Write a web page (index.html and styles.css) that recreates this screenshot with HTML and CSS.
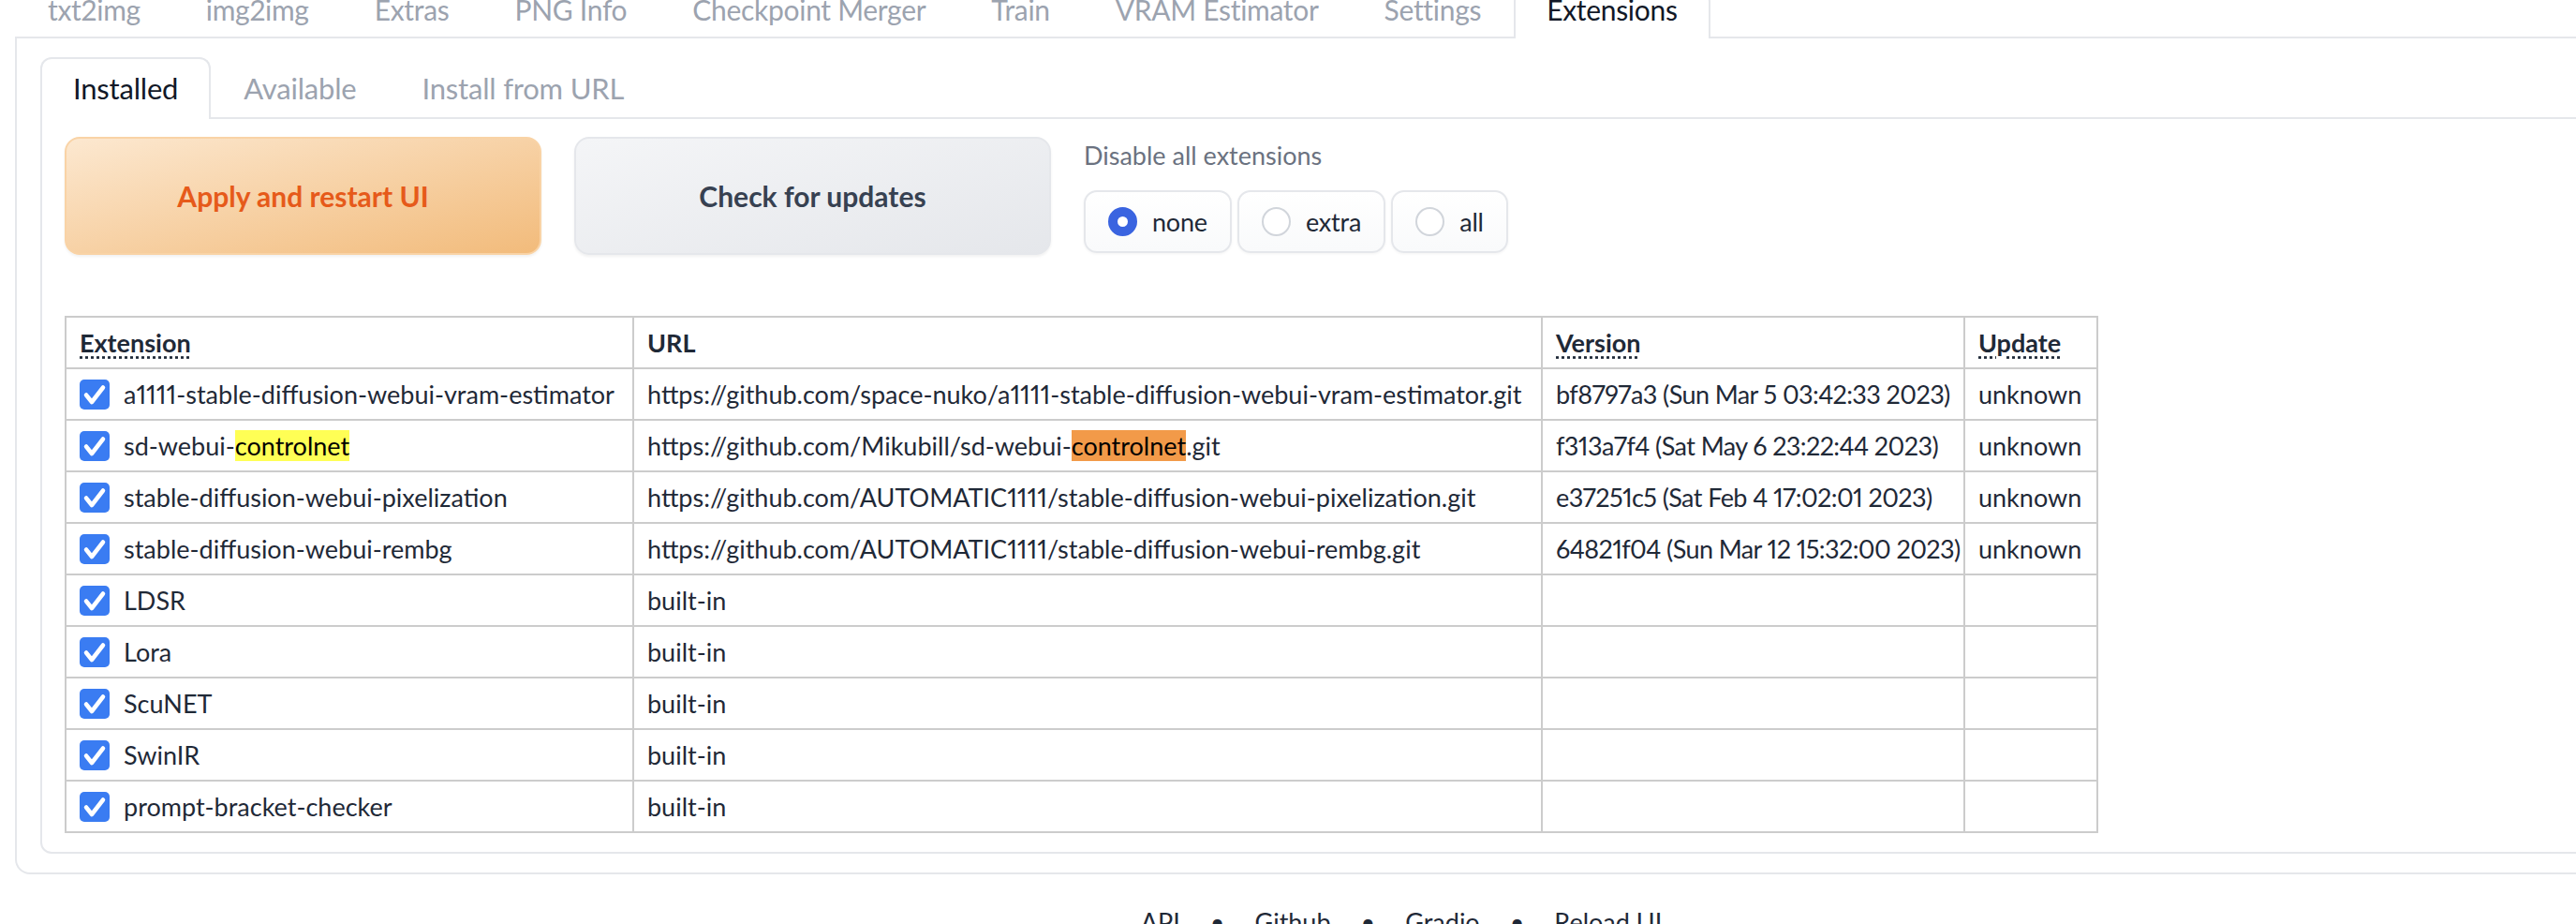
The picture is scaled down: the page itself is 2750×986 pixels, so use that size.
FILE: index.html
```html
<!DOCTYPE html>
<html lang="en">
<head>
<meta charset="utf-8">
<title>Extensions</title>
<link rel="stylesheet" href="styles.css">
</head>
<body>
<div class="app">
  <nav class="top-tabs">
    <button class="top-tab">txt2img</button>
    <button class="top-tab">img2img</button>
    <button class="top-tab">Extras</button>
    <button class="top-tab">PNG Info</button>
    <button class="top-tab">Checkpoint Merger</button>
    <button class="top-tab">Train</button>
    <button class="top-tab">VRAM Estimator</button>
    <button class="top-tab">Settings</button>
    <button class="top-tab selected">Extensions</button>
  </nav>
  <div class="tab-panel">
    <nav class="sub-tabs">
      <button class="sub-tab selected">Installed</button>
      <button class="sub-tab">Available</button>
      <button class="sub-tab">Install from URL</button>
    </nav>
    <div class="sub-panel">
      <div class="actions">
        <button class="btn btn-primary">Apply and restart UI</button>
        <button class="btn btn-secondary">Check for updates</button>
        <div class="radio-group">
          <span class="radio-label">Disable all extensions</span>
          <div class="radio-options">
            <label class="radio-option"><span class="radio checked"></span><span>none</span></label>
            <label class="radio-option"><span class="radio"></span><span>extra</span></label>
            <label class="radio-option"><span class="radio"></span><span>all</span></label>
          </div>
        </div>
      </div>
      <table class="ext-table">
        <colgroup>
          <col class="c-name"><col class="c-url"><col class="c-version"><col class="c-update">
        </colgroup>
        <thead>
          <tr>
            <th><abbr>Extension</abbr></th>
            <th>URL</th>
            <th><abbr>Version</abbr></th>
            <th><abbr>Update</abbr></th>
          </tr>
        </thead>
        <tbody>
          <tr>
            <td><span class="ext"><span class="cb"><svg viewBox="0 0 32 32"><path d="M7 16.5l6 7.5L25 8.5"/></svg></span>a1111-stable-diffusion-webui-vram-estimator</span></td>
            <td>https://github.com/space-nuko/a1111-stable-diffusion-webui-vram-estimator.git</td>
            <td class="ver">bf8797a3 (Sun Mar 5 03:42:33 2023)</td>
            <td>unknown</td>
          </tr>
          <tr>
            <td><span class="ext"><span class="cb"><svg viewBox="0 0 32 32"><path d="M7 16.5l6 7.5L25 8.5"/></svg></span><span>sd-webui-<mark class="hl">controlnet</mark></span></span></td>
            <td>https://github.com/Mikubill/sd-webui-<mark class="hl hl-active">controlnet</mark>.git</td>
            <td class="ver">f313a7f4 (Sat May 6 23:22:44 2023)</td>
            <td>unknown</td>
          </tr>
          <tr>
            <td><span class="ext"><span class="cb"><svg viewBox="0 0 32 32"><path d="M7 16.5l6 7.5L25 8.5"/></svg></span>stable-diffusion-webui-pixelization</span></td>
            <td>https://github.com/AUTOMATIC1111/stable-diffusion-webui-pixelization.git</td>
            <td class="ver">e37251c5 (Sat Feb 4 17:02:01 2023)</td>
            <td>unknown</td>
          </tr>
          <tr>
            <td><span class="ext"><span class="cb"><svg viewBox="0 0 32 32"><path d="M7 16.5l6 7.5L25 8.5"/></svg></span>stable-diffusion-webui-rembg</span></td>
            <td>https://github.com/AUTOMATIC1111/stable-diffusion-webui-rembg.git</td>
            <td class="ver">64821f04 (Sun Mar 12 15:32:00 2023)</td>
            <td>unknown</td>
          </tr>
          <tr>
            <td><span class="ext"><span class="cb"><svg viewBox="0 0 32 32"><path d="M7 16.5l6 7.5L25 8.5"/></svg></span>LDSR</span></td>
            <td>built-in</td><td></td><td></td>
          </tr>
          <tr>
            <td><span class="ext"><span class="cb"><svg viewBox="0 0 32 32"><path d="M7 16.5l6 7.5L25 8.5"/></svg></span>Lora</span></td>
            <td>built-in</td><td></td><td></td>
          </tr>
          <tr>
            <td><span class="ext"><span class="cb"><svg viewBox="0 0 32 32"><path d="M7 16.5l6 7.5L25 8.5"/></svg></span>ScuNET</span></td>
            <td>built-in</td><td></td><td></td>
          </tr>
          <tr>
            <td><span class="ext"><span class="cb"><svg viewBox="0 0 32 32"><path d="M7 16.5l6 7.5L25 8.5"/></svg></span>SwinIR</span></td>
            <td>built-in</td><td></td><td></td>
          </tr>
          <tr>
            <td><span class="ext"><span class="cb"><svg viewBox="0 0 32 32"><path d="M7 16.5l6 7.5L25 8.5"/></svg></span>prompt-bracket-checker</span></td>
            <td>built-in</td><td></td><td></td>
          </tr>
        </tbody>
      </table>
    </div>
  </div>
  <footer class="footer">
    <a>API</a><span class="dot">•</span><a>Github</a><span class="dot">•</span><a>Gradio</a><span class="dot">•</span><a>Reload UI</a>
  </footer>
</div>
</body>
</html>
```
FILE: styles.css
```css
html, body {
  margin: 0;
  padding: 0;
  background: #ffffff;
}
body {
  overflow: hidden;
  font-family: "Lato", "Noto Sans", "Liberation Sans", sans-serif;
  font-variant-numeric: proportional-nums;
  color: #1f2937;
}
button {
  font-family: inherit;
  font-variant-numeric: inherit;
  cursor: pointer;
}
.app {
  width: 2992px;
  box-sizing: border-box;
  padding: 0 16px;
  margin-top: -10px;
}

/* top tabs */
.top-tabs {
  display: flex;
  border-bottom: 2px solid #e5e7eb;
}
.top-tab {
  font-size: 30px;
  letter-spacing: -0.3px;
  line-height: 37px;
  padding: 0 33px 12px;
  margin-bottom: -2px;
  color: #9ca3af;
  background: none;
  border: 2px solid transparent;
  border-bottom: none;
  white-space: nowrap;
}
.top-tab.selected {
  color: #111827;
  background: #ffffff;
  border-color: #e5e7eb;
  border-radius: 12px 12px 0 0;
}

/* outer panel */
.tab-panel {
  border: 2px solid #e5e7eb;
  border-top: none;
  border-radius: 0 0 16px 16px;
  padding: 20px 25px 20px;
}
.sub-tabs {
  display: flex;
  border-bottom: 2px solid #e5e7eb;
}
.sub-tab {
  font-size: 31px;
  letter-spacing: -0.2px;
  line-height: 37px;
  padding: 13px 33px 14px;
  margin-bottom: -2px;
  color: #9ca3af;
  background: none;
  border: 2px solid transparent;
  border-bottom: none;
  white-space: nowrap;
}
.sub-tab.selected {
  color: #111827;
  background: #ffffff;
  border-color: #e5e7eb;
  border-radius: 12px 12px 0 0;
}
.sub-panel {
  border: 2px solid #e5e7eb;
  border-top: none;
  border-radius: 0 0 12px 12px;
  padding: 19px 24px 20px;
}

/* actions */
.actions {
  display: flex;
  align-items: flex-start;
  gap: 35px;
}
.btn {
  width: 509px;
  height: 126px;
  border-radius: 16px;
  font-size: 30px;
  font-weight: 700;
  box-shadow: 0 2px 3px rgba(0, 0, 0, 0.06);
}
.btn-primary {
  color: #e65a1a;
  border: 2px solid #f9d3a6;
  background: linear-gradient(to bottom right, #fce8d0, #f2bb7b);
}
.btn-secondary {
  color: #374151;
  border: 2px solid #e5e7eb;
  background: linear-gradient(to bottom right, #f4f5f7, #e5e7eb);
}
.radio-group {
  display: flex;
  flex-direction: column;
}
.radio-label {
  font-size: 27px;
  line-height: 40px;
  color: #6b7280;
}
.radio-options {
  display: flex;
  gap: 6px;
  margin-top: 17px;
}
.radio-option {
  display: flex;
  align-items: center;
  gap: 16px;
  padding: 13px 24px 13px 24px;
  font-size: 27px;
  letter-spacing: -0.2px;
  line-height: 37px;
  color: #1f2937;
  border: 2px solid #e5e7eb;
  border-radius: 14px;
  background: linear-gradient(to bottom, #ffffff, #f9fafb);
  box-shadow: 0 1px 3px rgba(0, 0, 0, 0.05);
}
.radio {
  width: 31px;
  height: 31px;
  box-sizing: border-box;
  border-radius: 50%;
  border: 2px solid #d1d5db;
  background: #ffffff;
}
.radio.checked {
  border: 10px solid #3a64e0;
  background: #ffffff;
}

/* table */
.ext-table {
  margin-top: 65px;
  border-collapse: collapse;
  table-layout: fixed;
  width: 2169px;
  font-size: 27px;
  line-height: 37px;
  color: #1f2937;
}
.c-name { width: 606px; }
.c-url { width: 970px; }
.c-version { width: 451px; }
.c-update { width: 142px; }
.ext-table th,
.ext-table td {
  border: 2px solid #cccccc;
  padding: 8px 14px;
  text-align: left;
  white-space: nowrap;
  overflow: hidden;
}
.ext-table th {
  font-weight: 700;
}
.ext-table td.ver {
  letter-spacing: -0.6px;
}
.ext-table abbr {
  text-decoration: underline dotted;
  text-underline-offset: 4px;
}
.ext {
  display: flex;
  align-items: center;
  gap: 15px;
}
.cb {
  flex: none;
  width: 32px;
  height: 32px;
  border-radius: 5px;
  background: #3a7cf2;
  display: flex;
}
.cb svg {
  width: 32px;
  height: 32px;
  fill: none;
  stroke: #ffffff;
  stroke-width: 4.5;
  stroke-linecap: round;
  stroke-linejoin: round;
}
.hl {
  background: #ffff55;
  color: #000000;
}
.hl-active {
  background: #f29a49;
}

/* footer */
.footer {
  margin-top: 32px;
  text-align: center;
  font-size: 27px;
  line-height: 37px;
  color: #1f2937;
}
.dot {
  margin: 0 32px;
}
```
